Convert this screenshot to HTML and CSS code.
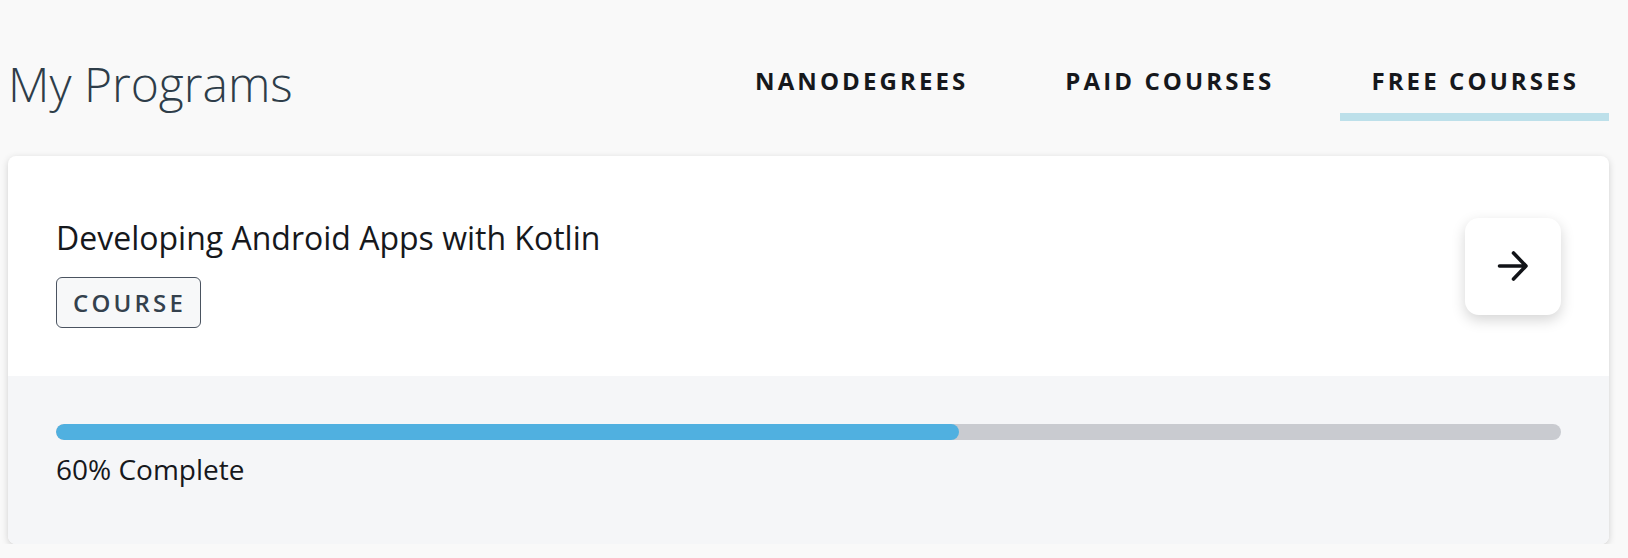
FILE: index.html
```html
<!DOCTYPE html>
<html lang="en">
<head>
<meta charset="utf-8">
<title>My Programs</title>
<link rel="stylesheet" href="styles.css">
</head>
<body>
<div class="page">
  <header class="header">
    <h1 class="title">My Programs</h1>
    <nav class="tabs">
      <a class="tab">Nanodegrees</a>
      <a class="tab">Paid Courses</a>
      <a class="tab tab-active">Free Courses</a>
    </nav>
  </header>
  <section class="card">
    <div class="card-top">
      <div class="info">
        <h2 class="course-title">Developing Android Apps with Kotlin</h2>
        <span class="badge">Course</span>
      </div>
      <button class="go" aria-label="Open course">
        <svg width="32" height="32" viewBox="0 0 32 32" fill="none" stroke="#111317" stroke-width="3.6" stroke-linecap="round" stroke-linejoin="round"><path d="M2.5 16H29M16.5 3L29 16L16.5 29"/></svg>
      </button>
    </div>
    <div class="card-bottom">
      <div class="progress"><div class="fill" style="width:60%"></div></div>
      <p class="pct">60% Complete</p>
    </div>
  </section>
</div>
</body>
</html>
```

FILE: styles.css
```css
* { box-sizing: border-box; }
html, body { margin: 0; padding: 0; }
body {
  background: #f9f9f9;
  font-family: "Open Sans", "Noto Sans", sans-serif;
  color: #16181c;
}
.page {
  width: 1601px;
  margin-left: 8px;
}
.header {
  display: flex;
  justify-content: space-between;
  align-items: flex-start;
  height: 121px;
}
.title {
  margin: 56px 0 0 0;
  font-size: 48px;
  line-height: 56px;
  font-weight: 300;
  color: #2e3d49;
}
.tabs {
  display: flex;
  gap: 36px;
  margin-top: 63px;
}
.tab {
  display: block;
  padding: 0 30px 14px 31px;
  font-size: 24px;
  line-height: 36px;
  font-weight: 700;
  letter-spacing: 3.1px;
  text-transform: uppercase;
  color: #16181c;
  border-bottom: 8px solid transparent;
}
.tab-active { border-bottom-color: #bde0ea; }
.card {
  margin-top: 35px;
  background: #fff;
  border-radius: 8px;
  box-shadow: 0 2px 7px rgba(0, 0, 0, 0.17);
  overflow: hidden;
}
.card-top {
  display: flex;
  align-items: center;
  justify-content: space-between;
  padding: 48px;
  height: 220px;
}
.info { display: flex; flex-direction: column; align-items: flex-start; }
.course-title {
  margin: 14px 0 19px 0;
  font-size: 32px;
  line-height: 40px;
  font-weight: 400;
  color: #16181c;
}
.badge {
  display: inline-block;
  height: 51px;
  padding: 0 14px 0 16px;
  border: 1px solid #4a5360;
  border-radius: 6px;
  background: #f7f8f9;
  font-size: 24px;
  line-height: 49px;
  font-weight: 600;
  letter-spacing: 3.2px;
  text-transform: uppercase;
  color: #34414d;
}
.go {
  width: 96px;
  height: 97px;
  border: none;
  border-radius: 14px;
  background: #fff;
  box-shadow: 0 5px 14px rgba(0, 0, 0, 0.17);
  display: flex;
  align-items: center;
  justify-content: center;
  padding: 0;
}
.card-bottom {
  background: #f5f6f8;
  padding: 48px 48px 55px 48px;
  height: 168px;
}
.progress {
  height: 16px;
  border-radius: 8px;
  background: #c9cbd0;
  overflow: hidden;
}
.fill {
  height: 100%;
  border-radius: 8px;
  background: #50b0e0;
}
.pct {
  margin: 9px 0 0 0;
  font-size: 28px;
  line-height: 40px;
  color: #16181c;
}
```
